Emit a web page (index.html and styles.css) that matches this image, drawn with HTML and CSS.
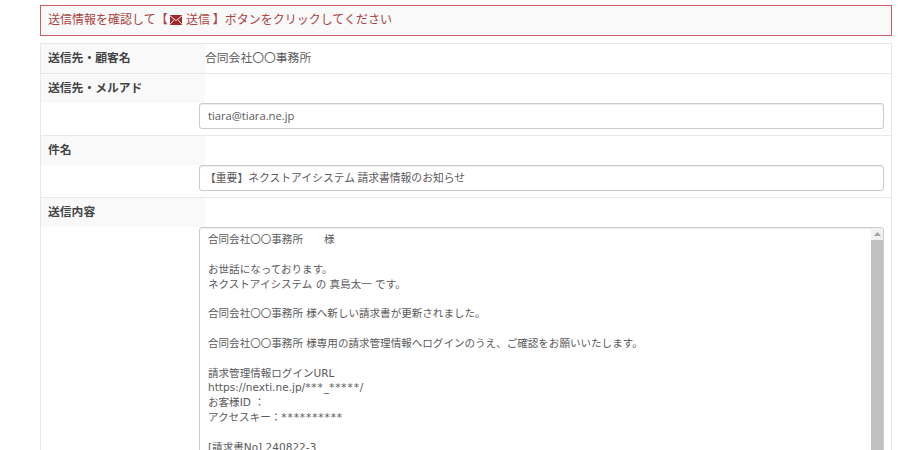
FILE: index.html
```html
<!DOCTYPE html>
<html lang="ja">
<head>
<meta charset="utf-8">
<title>送信情報</title>
<link rel="stylesheet" href="styles.css">
</head>
<body>
<div class="alert">送信情報を確認して【 <svg class="mail" viewBox="0 0 12 10"><path class="mail-body" d="M0 0h12v10H0z"/><path class="mail-line" d="M0 .8 6 5.6 12 .8M0 9.4 4.4 4.4M12 9.4 7.6 4.4"/></svg> 送信 】ボタンをクリックしてください</div>
<div class="table">
  <div class="row row-first">
    <div class="label">送信先・顧客名</div>
    <div class="value">合同会社〇〇事務所</div>
  </div>
  <div class="row">
    <div class="label label-wide">送信先・メルアド</div>
    <div class="field-wrap"><div class="input input-mail">tiara@tiara.ne.jp</div></div>
  </div>
  <div class="row">
    <div class="label label-wide">件名</div>
    <div class="field-wrap"><div class="input input-subject">【重要】ネクストアイシステム 請求書情報のお知らせ</div></div>
  </div>
  <div class="row row-last">
    <div class="label label-wide">送信内容</div>
    <div class="field-wrap">
      <div class="textarea">
        <div class="text">
          <div class="line gap">合同会社〇〇事務所　　様</div>
          <div class="line">お世話になっております。</div>
          <div class="line gap">ネクストアイシステム の 真島太一 です。</div>
          <div class="line gap">合同会社〇〇事務所 様へ新しい請求書が更新されました。</div>
          <div class="line gap">合同会社〇〇事務所 様専用の請求管理情報へログインのうえ、ご確認をお願いいたします。</div>
          <div class="line">請求管理情報ログインURL</div>
          <div class="line">https://nexti.ne.jp/<span class="stars">***</span>_<span class="stars">*****</span>/</div>
          <div class="line">お客様ID ：</div>
          <div class="line gap">アクセスキー：<span class="stars">**********</span></div>
          <div class="line">[請求書No] 240822-3</div>
        </div>
        <div class="scrollbar"><svg class="arrow" viewBox="0 0 7 4"><path d="M3.5 0 7 4H0z"/></svg><div class="thumb"></div></div>
      </div>
    </div>
  </div>
</div>
</body>
</html>
```
FILE: styles.css
```css
* { box-sizing: border-box; }
body {
  margin: 0;
  height: 450px;
  overflow: hidden;
  background: #fff;
  color: #5a5a5a;
  font-family: "Noto Sans CJK JP", "Noto Sans", sans-serif;
  font-size: 11.8px;
  padding: 5px 8px 0 40px;
}
.alert {
  height: 31px;
  border: 1px solid #cf5f65;
  background: #f9f9f9;
  color: #a94442;
  font-size: 12px;
  line-height: 26px;
  padding-left: 7px;
  white-space: pre;
}
.mail { width: 12px; height: 10px; display: inline-block; vertical-align: -1px; margin-right: 1px; }
.mail-body { fill: #a32a2a; }
.mail-line { fill: none; stroke: #fff; stroke-width: .9; }
.table {
  margin-top: 7px;
  border: 1px solid #e8e8e8;
  border-bottom: 0;
  height: 410px;
}
.row { border-bottom: 1px solid #e8e8e8; }
.row-first { display: flex; height: 30px; }
.row-last { border-bottom: 0; }
.label {
  width: 164px;
  background: #f9f9f9;
  font-weight: 700;
  color: #444;
  padding-left: 7px;
  line-height: 26px;
}
.label-wide { height: 29px; }
.value { line-height: 26px; }
.field-wrap { padding: 0 7px 6px 158px; }
.input {
  height: 26px;
  border: 1px solid #ccc;
  border-radius: 3px;
  padding-left: 8px;
  font-size: 10.8px;
  line-height: 23px;
  box-shadow: inset 0 1px 1px rgba(0,0,0,.075);
}
.input-mail { font-family: "Open Sans", "Noto Sans CJK JP", sans-serif; font-size: 11.2px; }
.input-subject { padding-left: 5px; }
.textarea {
  height: 300px;
  border: 1px solid #ccc;
  border-radius: 3px 3px 0 0;
  box-shadow: inset 0 1px 1px rgba(0,0,0,.075);
  overflow: hidden;
  display: flex;
}
.text {
  flex: 1;
  padding: 4px 8px;
  font-family: "DejaVu Sans", "Noto Sans CJK JP", sans-serif;
  font-size: 10.55px;
  line-height: 14.85px;
}
.line { white-space: pre-wrap; }
.gap { margin-bottom: 14.85px; }
.stars { letter-spacing: .9px; }
.scrollbar {
  width: 12px;
  background: #f1f1f1;
  flex: none;
  display: flex;
  flex-direction: column;
  align-items: center;
}
.arrow { width: 7px; height: 4px; margin: 4px 0 4px; fill: #a3a3a3; }
.thumb { width: 100%; height: 240px; background: #c1c1c1; }
```
